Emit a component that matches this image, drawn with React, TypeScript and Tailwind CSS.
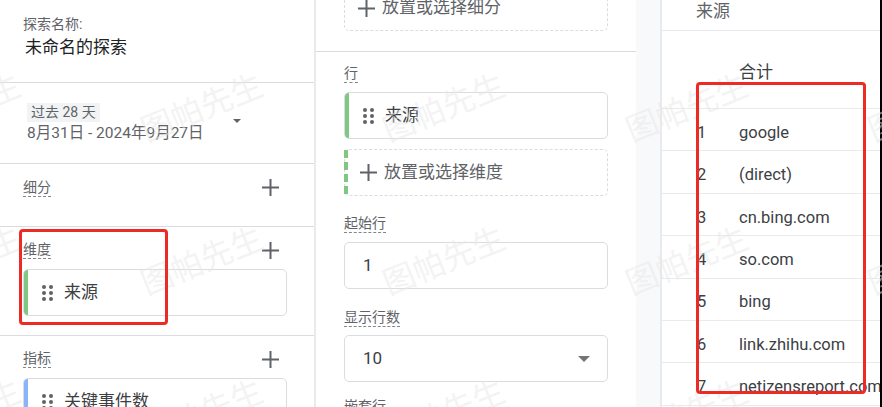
import React from "react";

function Label({ children, className = "" }: { children: React.ReactNode; className?: string }) {
  return (
    <div className={`w-fit text-[14px] leading-[18px] text-[#5f6368] border-b border-dashed border-[#80868b] ${className}`}>
      {children}
    </div>
  );
}

function Plus({ size = 17, className = "" }: { size?: number; className?: string }) {
  return (
    <svg width={size} height={size} viewBox="0 0 17 17" className={`shrink-0 ${className}`}>
      <path d="M8.5 0v17M0 8.5h17" stroke="#5f6368" strokeWidth="2" fill="none" />
    </svg>
  );
}

function Drag() {
  return (
    <svg width="11" height="16" viewBox="0 0 11 16" className="shrink-0">
      {[2, 8, 14].map((y) =>
        [2, 9].map((x) => <circle key={`${x}-${y}`} cx={x} cy={y} r="2" fill="#5f6368" />)
      )}
    </svg>
  );
}

function Chip({ text, color, className = "" }: { text: string; color: string; className?: string }) {
  return (
    <div className={`relative flex h-[47px] items-center overflow-hidden rounded-[5px] border border-[#dadce0] bg-white pl-[18px] ${className}`}>
      <div className={`absolute left-0 top-0 h-full w-1 ${color}`} />
      <Drag />
      <span className="ml-[11px] text-[17px] text-[#3c4043]">{text}</span>
    </div>
  );
}

function Row({ n, text }: { n: number; text: string }) {
  return (
    <div className="flex h-[42.4px] shrink-0 items-center border-b border-[#e8eaed] pt-[7px] text-[16.5px] text-[#3c4043]">
      <span className="w-[77px] shrink-0 pl-[35px]">{n}</span>
      <span className="whitespace-nowrap">{text}</span>
    </div>
  );
}

const marks: [number, number][] = [
  [-104, 92], [138, 92], [380, 92], [623, 92], [865, 92],
  [-104, 245], [138, 245], [380, 245], [623, 245], [865, 245],
  [-104, 398], [138, 398], [380, 398], [623, 398], [865, 398],
];

export default function App() {
  return (
    <div className="relative flex h-[407px] w-[882px] overflow-hidden bg-white" style={{ fontFamily: 'Roboto, "Noto Sans CJK SC", sans-serif' }}>
      {/* Column 1 */}
      <div className="flex w-[316px] shrink-0 flex-col border-r-2 border-[#e8eaed]">
        <div className="h-[83px] shrink-0 border-b border-[#dadce0] pl-[23px] pt-[15px]">
          <div className="text-[14px] leading-[18px] text-[#5f6368]">探索名称:</div>
          <div className="mt-[3px] pl-[2px] text-[17px] leading-[22px] text-[#202124]">未命名的探索</div>
        </div>
        <div className="flex h-[81px] shrink-0 items-center border-b border-[#dadce0] pl-[27px]">
          <div>
            <div className="w-fit bg-[#f1f3f4] px-1 text-[14px] leading-[19px] text-[#5f6368]">过去 28 天</div>
            <div className="mt-[1px] text-[15.5px] leading-[20px] text-[#5f6368]">8月31日 - 2024年9月27日</div>
          </div>
          <div className="mb-1 ml-[29px] h-0 w-0 border-x-[4px] border-t-[4px] border-x-transparent border-t-[#5f6368]" />
        </div>
        <div className="flex h-[63px] shrink-0 items-start justify-between border-b border-[#dadce0] pl-[23px] pr-[35px] pt-[14px]">
          <Label>细分</Label>
          <Plus className="mt-[1px]" />
        </div>
        <div className="h-[109px] shrink-0 border-b border-[#dadce0] pl-[23px] pr-[27px] pt-[13px]">
          <div className="flex items-start justify-between pr-[8px]">
            <Label>维度</Label>
            <Plus className="mt-[2px]" />
          </div>
          <Chip text="来源" color="bg-[#81c784]" className="mt-[10px]" />
        </div>
        <div className="pl-[23px] pr-[27px] pt-[13px]">
          <div className="flex items-start justify-between pr-[8px]">
            <Label>指标</Label>
            <Plus className="mt-[2px]" />
          </div>
          <Chip text="关键事件数" color="bg-[#8ab4f8]" className="mt-[10px]" />
        </div>
      </div>

      {/* Column 2 */}
      <div className="flex w-[320px] shrink-0 flex-col">
        <div className="h-[52px] shrink-0 border-b border-[#dadce0] px-[28px]">
          <div className="-mt-[15px] flex h-[46px] items-center rounded-[5px] border border-dashed border-[#dadce0] pl-[13px]">
            <Plus />
            <span className="ml-[7px] text-[17px] text-[#5f6368]">放置或选择细分</span>
          </div>
        </div>
        <div className="flex flex-col px-[28px] pt-[12px]">
          <Label>行</Label>
          <Chip text="来源" color="bg-[#81c784]" className="mt-[9px]" />
          <div className="relative mt-[10px] flex h-[47px] items-center rounded-[5px] border border-dashed border-[#dadce0] pl-[15px]">
            <div className="absolute -left-px top-0 h-full w-1 bg-[repeating-linear-gradient(#81c784_0_8px,transparent_8px_12px)]" />
            <Plus />
            <span className="ml-[7px] text-[17px] text-[#5f6368]">放置或选择维度</span>
          </div>
          <Label className="mt-[18px]">起始行</Label>
          <div className="mt-[9px] flex h-[47px] items-center rounded-[5px] border border-[#dadce0] pl-[18px] text-[17px] text-[#3c4043]">1</div>
          <Label className="mt-[19px]">显示行数</Label>
          <div className="mt-[8px] flex h-[47px] items-center justify-between rounded-[5px] border border-[#dadce0] pl-[18px] pr-[17px] text-[17px] text-[#3c4043]">
            <span>10</span>
            <div className="h-0 w-0 border-x-[6px] border-t-[6px] border-x-transparent border-t-[#757575]" />
          </div>
          <Label className="mt-[15px]">嵌套行</Label>
        </div>
      </div>

      {/* Gap */}
      <div className="w-[24px] shrink-0 bg-[#f8f9fa]" />

      {/* Column 3 */}
      <div className="flex w-[220px] shrink-0 flex-col overflow-hidden border-l-2 border-[#e8eaed]">
        <div className="flex h-[31px] shrink-0 items-start border-b border-[#e8eaed] pl-[34px] text-[17px] leading-[22px] text-[#5f6368]">来源</div>
        <div className="flex h-[78px] shrink-0 items-center border-b border-[#e8eaed] pl-[77px] pt-[6px] text-[17px] text-[#3c4043]">合计</div>
        <Row n={1} text="google" />
        <Row n={2} text="(direct)" />
        <Row n={3} text="cn.bing.com" />
        <Row n={4} text="so.com" />
        <Row n={5} text="bing" />
        <Row n={6} text="link.zhihu.com" />
        <Row n={7} text="netizensreport.com" />
      </div>

      {/* Right edge */}
      <div className="w-[2px] shrink-0 bg-black" />

      {/* Watermarks */}
      {marks.map(([x, y], i) => (
        <div
          key={i}
          className="pointer-events-none absolute -rotate-[22deg] whitespace-nowrap text-[32px] leading-none text-[#e8e8e8]/50"
          style={{ left: x, top: y }}
        >
          图帕先生
        </div>
      ))}

      {/* Red highlight boxes */}
      <div className="pointer-events-none absolute left-[19px] top-[229px] h-[96px] w-[149px] rounded-[4px] border-[3px] border-[#ee2a24]" />
      <div className="pointer-events-none absolute left-[696px] top-[82px] h-[312px] w-[170px] rounded-[4px] border-[3px] border-[#ee2a24]" />
    </div>
  );
}
